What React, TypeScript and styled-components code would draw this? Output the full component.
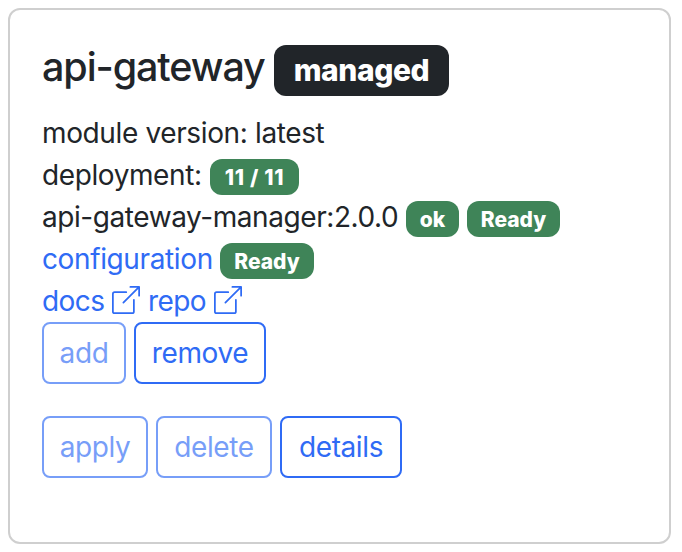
import React from "react";
import styled, { createGlobalStyle } from "styled-components";

const Global = createGlobalStyle`
  *, *::before, *::after { box-sizing: border-box; }
  body { margin: 0; background: #fff; color: #212529; font-family: Inter, "Liberation Sans", sans-serif; font-size: 28px; line-height: 42px; }
`;

const Card = styled.section`
  margin: 8px 11px 8px 8px;
  height: 536px;
  padding: 34px 32px;
  border: 2px solid #cfcfcf;
  border-radius: 12px;
`;

const Title = styled.h5`
  margin: 0 0 16px;
  height: 52px;
  display: flex;
  align-items: flex-start;
  gap: 9px;
  font-size: 39.5px;
  line-height: 46px;
  font-weight: 500;
`;

const Line = styled.div`
  height: 42px;
  display: flex;
  gap: 8px;
  white-space: nowrap;
`;

const Text = styled.span<{ $w: number; $s: number }>`
  width: ${(p) => p.$w}px;
  letter-spacing: ${(p) => p.$s}px;
  white-space: nowrap;
`;

const Link = styled(Text).attrs({ as: "a" })`
  color: #2f6bf5;
`;

const Badge = styled.span<{ $w: number; $dark?: boolean; $s?: number }>`
  display: flex;
  align-items: center;
  justify-content: center;
  width: ${(p) => p.$w}px;
  height: ${(p) => (p.$dark ? 51 : 36)}px;
  margin-top: ${(p) => (p.$dark ? 1 : 5)}px;
  padding-bottom: ${(p) => (p.$dark ? 1 : 0)}px;
  border-radius: 12px;
  background: ${(p) => (p.$dark ? "#212529" : "#3f8458")};
  color: #fff;
  font-size: ${(p) => (p.$dark ? 30 : 21)}px;
  line-height: 1;
  font-weight: 800;
  letter-spacing: ${(p) => p.$s ?? 0}px;
`;

const Icon = styled.svg`
  width: 28px;
  height: 28px;
  margin-top: 6px;
  fill: #2f6bf5;
`;

const Buttons = styled.div`
  display: flex;
  gap: 8px;
  margin-bottom: 32px;
`;

const Button = styled.button<{ $w: number }>`
  width: ${(p) => p.$w}px;
  height: 62px;
  padding: 0;
  border: 2px solid #2f6bf5;
  border-radius: 8px;
  background: #fff;
  color: #2f6bf5;
  font: inherit;
  letter-spacing: -0.4px;
  &:disabled { opacity: 0.65; }
`;

const External = () => (
  <Icon viewBox="0 0 16 16">
    <path fillRule="evenodd" d="M8.636 3.5a.5.5 0 0 0-.5-.5H1.5A1.5 1.5 0 0 0 0 4.5v10A1.5 1.5 0 0 0 1.5 16h10a1.5 1.5 0 0 0 1.5-1.5V7.864a.5.5 0 0 0-1 0V14.5a.5.5 0 0 1-.5.5h-10a.5.5 0 0 1-.5-.5v-10a.5.5 0 0 1 .5-.5h6.636a.5.5 0 0 0 .5-.5" />
    <path fillRule="evenodd" d="M16 .5a.5.5 0 0 0-.5-.5h-5a.5.5 0 0 0 0 1h3.793L6.146 9.146a.5.5 0 1 0 .708.708L15 1.707V5.5a.5.5 0 0 0 1 0z" />
  </Icon>
);

export default function App() {
  return (
    <>
      <Global />
      <Card>
        <Title>
          <Text $w={223} $s={-1.1}>api-gateway</Text>
          <Badge $dark $w={175} $s={-0.4}>managed</Badge>
        </Title>
        <Line><Text $w={284} $s={-0.37}>module version: latest</Text></Line>
        <Line><Text $w={160} $s={-0.4}>deployment:</Text><Badge $w={89} $s={0.7}>11 / 11</Badge></Line>
        <Line><Text $w={356} $s={-0.43}>api-gateway-manager:2.0.0</Text><Badge $w={53}>ok</Badge><Badge $w={93}>Ready</Badge></Line>
        <Line><Link $w={170} $s={-0.38}>configuration</Link><Badge $w={94}>Ready</Badge></Line>
        <Line><Link $w={62} $s={-0.6}>docs</Link><External /><Link $w={58} $s={-0.6}>repo</Link><External /></Line>
        <Buttons><Button $w={84} disabled>add</Button><Button $w={132}>remove</Button></Buttons>
        <Buttons><Button $w={106} disabled>apply</Button><Button $w={116} disabled>delete</Button><Button $w={122}>details</Button></Buttons>
      </Card>
    </>
  );
}
